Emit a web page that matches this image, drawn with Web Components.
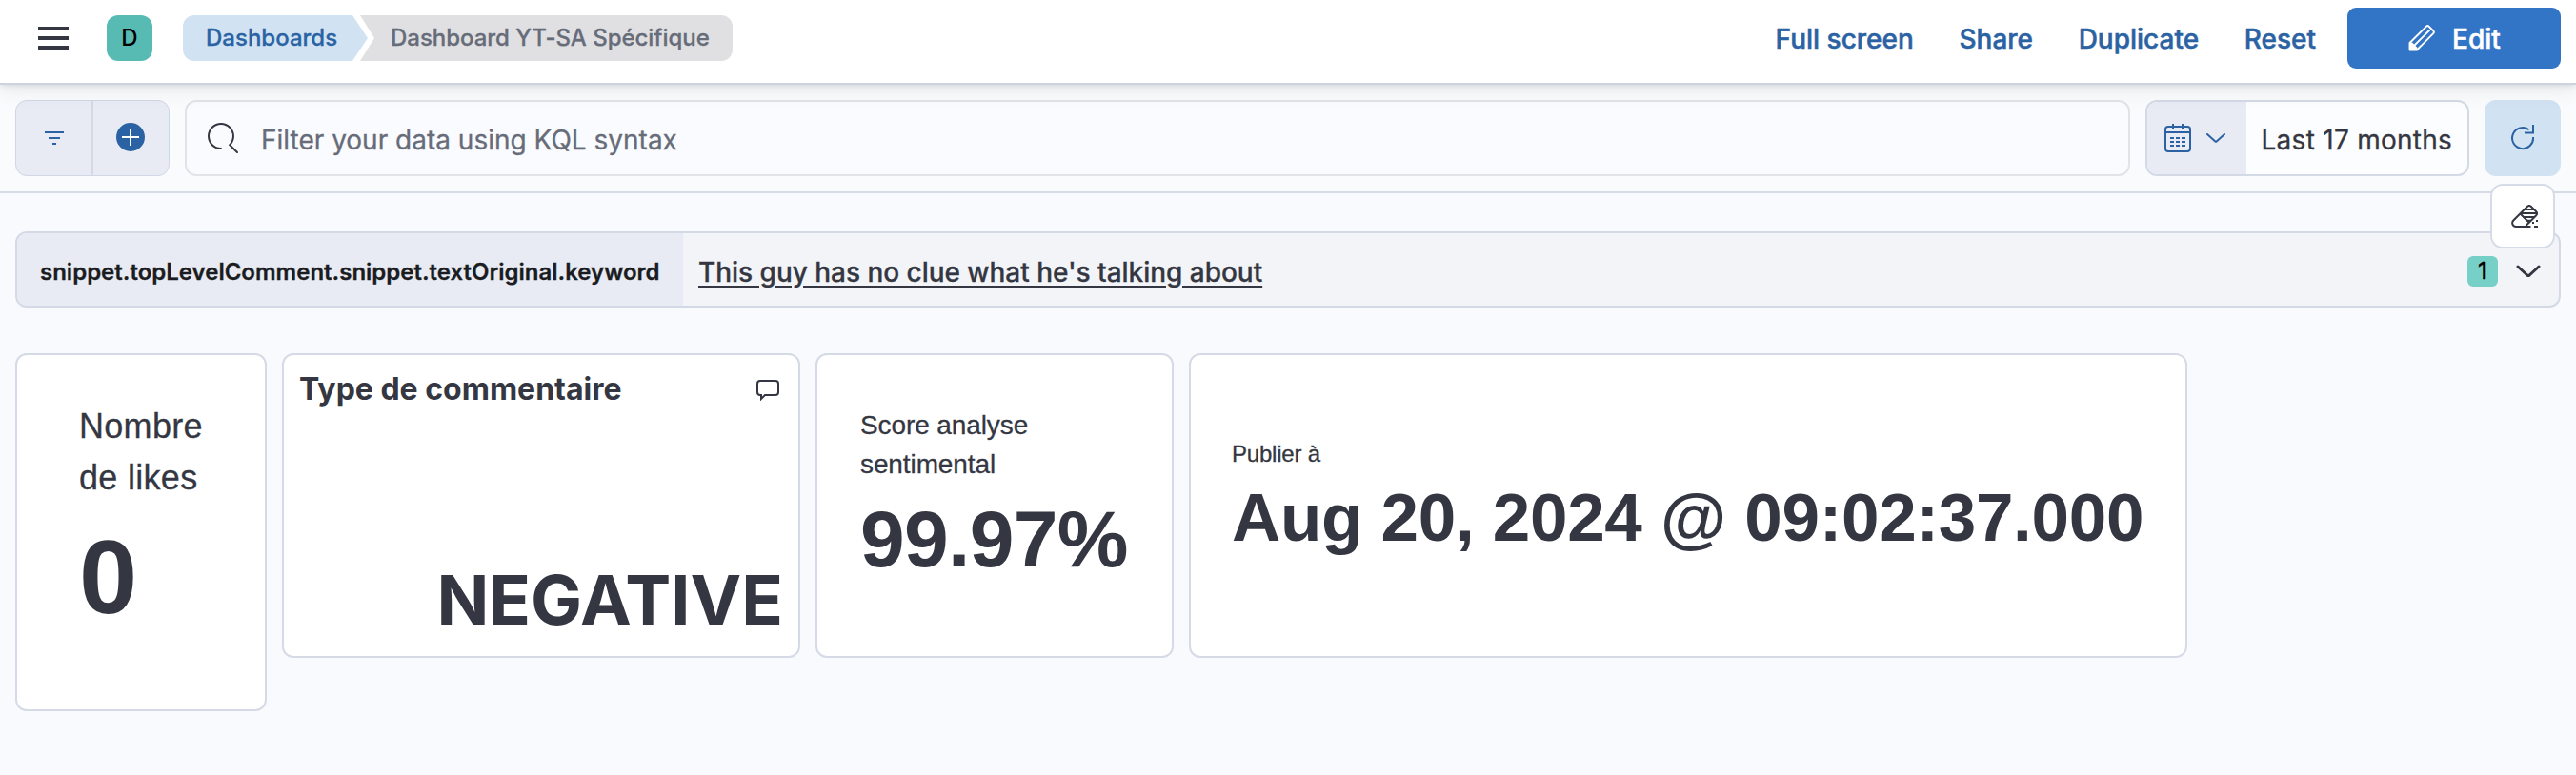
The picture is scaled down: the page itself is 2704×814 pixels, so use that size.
<!DOCTYPE html>
<html lang="fr">
<head>
<meta charset="utf-8">
<title>Dashboard YT-SA Spécifique</title>
<style>
html,body{margin:0;padding:0}
body{width:2704px;height:814px;overflow:hidden;background:#f9fafe;font-family:Inter,"Liberation Sans",sans-serif;color:#343741}
</style>
</head>
<body>
<dash-app></dash-app>
<script>
const base = '*{box-sizing:border-box}svg{display:block;flex:none}:host{box-sizing:border-box}';
function define(name, css, html) {
  const t = document.createElement('template');
  t.innerHTML = `<style>${base}${css}</style>${html}`;
  customElements.define(name, class extends HTMLElement {
    constructor() {
      super();
      this.attachShadow({ mode: 'open' }).appendChild(t.content.cloneNode(true));
    }
  });
}

define('crumb-trail', `
:host{display:flex;height:48px;font-size:24px;line-height:48px;font-weight:500;white-space:nowrap;-webkit-text-stroke:.3px currentColor}
.a{width:194px;padding-left:24px;color:#2a62a3;background:#d1e2f2;border-radius:12px 0 0 12px;clip-path:polygon(0 0,178px 0,194px 50%,178px 100%,0 100%)}
.b{width:391px;margin-left:-8px;padding-left:32px;letter-spacing:-.03px;color:#676c79;background:#e0e0e3;border-radius:0 12px 12px 0;clip-path:polygon(0 0,100% 0,100% 100%,0 100%,15px 50%)}
`, `<div class="a"><slot name="parent"></slot></div><div class="b"><slot></slot></div>`);

define('top-link', `:host{display:block;font-size:28px;line-height:64px;padding-top:1px;font-weight:500;color:#2a62a3;white-space:nowrap;-webkit-text-stroke:.5px currentColor}`, `<slot></slot>`);

define('edit-button', `
:host{display:flex;width:224px;height:64px;background:#3274c5;border-radius:9px;color:#fff;font-size:28px;font-weight:500;padding-left:64px;align-items:center;gap:18px}
span{padding-top:1px;-webkit-text-stroke:.5px currentColor}
`, `<svg width="28" height="28" viewBox="0 0 28 28" fill="none" stroke="#fff" stroke-width="1.900" stroke-linejoin="round"><path d="M1.500 19 18.800 1.800a2 2 0 0 1 2.800 0l4.600 4.600a2 2 0 0 1 0 2.800L9 26.500H1.500z"/><path d="M7 21 22 6" stroke-linecap="round"/><path d="M1 18.500 4 18.500 9.500 24 9 27H1z" fill="#fff" stroke="none"/></svg><span><slot></slot></span>`);

define('top-bar', `
:host{display:flex;position:relative;z-index:2;height:89px;padding:8px 16px 15px 40px;background:#fff;border-bottom:2px solid #cdd4e0;box-shadow:0 1.4px 3px rgba(0,0,0,.07),0 4px 8px rgba(0,0,0,.05),0 9px 20px rgba(0,0,0,.05)}
.menu{padding-top:20px;width:72px}
.avatar{width:48px;height:48px;margin:8px 32px 0 0;border-radius:12px;background:#57bbb3;color:#000;text-align:center;font-size:24px;line-height:48px;font-weight:500}
crumb-trail{margin-top:8px}
nav{margin-left:auto;display:flex;gap:47.6px}
edit-button{margin-left:-14.6px}
`, `
<div class="menu"><svg width="32" height="24" fill="#343741"><path d="M0 0h32v4H0zM0 10h32v4H0zM0 20h32v4H0z"/></svg></div>
<div class="avatar">D</div>
<crumb-trail><span slot="parent">Dashboards</span>Dashboard YT-SA Spécifique</crumb-trail>
<nav><top-link>Full screen</top-link><top-link>Share</top-link><top-link>Duplicate</top-link><top-link>Reset</top-link><edit-button>Edit</edit-button></nav>`);

define('filter-buttons', `
:host{display:flex;width:162px;height:80px;border-radius:12px;background:#e8ebf3;border:1px solid #d0d7e5;color:#2a62a3}
div{width:79px;display:flex;align-items:center;justify-content:center}
div+div{width:81px;border-left:2px solid #d3d9e7}
div:first-child{padding:2px 1px 0 0}
`, `<div><svg width="20" height="14" fill="#2a62a3"><path d="M0 0h20v2H0zM4 6h12v2H4zM8 12h4v2H8z"/></svg></div>
<div><svg width="30" height="30" style="margin:-2px 1px 0 0"><circle cx="15" cy="15" r="15" fill="#2a62a3"/><path d="M6 15h18M15 6v18" stroke="#fff" stroke-width="2"/></svg></div>`);

define('search-field', `
:host{display:flex;flex:1;height:80px;border:2px solid #e1e3e7;border-radius:12px;background:#fafbfe;padding:0 22px;color:#676c79;font-size:28px;gap:24px;align-items:center}
span{padding-top:3px;white-space:nowrap;-webkit-text-stroke:.3px currentColor}
`, `<svg width="32" height="32" viewBox="0 0 16 16" fill="#343741"><path d="M11.271 11.978l3.872 3.873a.502.502 0 00.708 0 .502.502 0 000-.708l-3.565-3.564c2.380-2.747 2.267-6.923-.342-9.532-2.730-2.730-7.170-2.730-9.898 0-2.728 2.729-2.728 7.170 0 9.900a6.955 6.955 0 004.949 2.050.5.5 0 000-1 5.960 5.960 0 01-4.242-1.757 6.010 6.010 0 010-8.486 6.004 6.004 0 018.484 0 6.010 6.010 0 010 8.486.5.5 0 00-.034.738z"/></svg><span><slot></slot></span>`);

define('date-picker', `
:host{display:flex;width:340px;height:80px;border:2px solid #d3dae6;border-radius:12px;background:#fcfdfe;overflow:hidden;font-size:28px}
.q{display:flex;align-items:center;width:104px;background:#e8ebf3;padding-left:18px;gap:16px}
.t{flex:1;padding:2px 0 0 15.5px;line-height:76px;white-space:nowrap;letter-spacing:.27px;-webkit-text-stroke:.3px currentColor}
`, `<div class="q"><svg width="28" height="30" fill="none" stroke="#2a62a3" stroke-width="2"><rect x="1" y="3" width="26" height="26" rx="3"/><path d="M1 9h26M9 0v6M19 0v6"/><path d="M6 15h16M6 19h16M6 23h16" stroke-dasharray="4 2"/></svg>
<svg width="20" height="10" fill="none" stroke="#2a62a3" stroke-width="2" stroke-linecap="round" stroke-linejoin="round"><path d="M1 1l8.300 7.400q.7.600 1.400 0L19 1"/></svg></div><div class="t"><slot></slot></div>`);

define('refresh-button', `
:host{display:block;width:80px;height:80px;border-radius:12px;background:#d1e2f2;padding:26px 0 0 28px}
`, `<svg width="25" height="28" fill="none" stroke="#2a62a3" stroke-width="2"><path d="M18.600 5.300A11 11 0 1 0 23 13M23 0v8.500H14"/></svg>`);

define('query-bar', `
:host{display:flex;height:114px;padding:16px;gap:16px;border-bottom:2px solid #d5dbe7;background:#fafbfd}
`, `<filter-buttons></filter-buttons><search-field>Filter your data using KQL syntax</search-field><date-picker>Last 17 months</date-picker><refresh-button></refresh-button>`);

define('clear-button', `
:host{position:absolute;display:block;left:2614px;top:193px;z-index:1;width:68px;height:68px;border:2px solid #d5dbe7;border-radius:13px;background:#fff;padding:20px}
`, `<svg width="28" height="24" fill="none" stroke="#343741" stroke-width="2" stroke-linejoin="round"><path d="M20.500 23H5C1.500 23 0 19 2.300 16.500L16.800 2a3 3 0 0 1 4.200 0l5.200 5.200a3 3 0 0 1 0 4L15.500 22M9.500 9.500 19 19M14.500 5h9M11 9h16M13 13h12"/><path d="M17 16.500h3" stroke-width="1.500"/><path d="M22 18h2v2h-2zM26 16h2v2h-2zM24 22h4v2h-4z" fill="#343741" stroke="none"/></svg>`);

define('control-bar', `
:host{display:flex;height:80px;margin:40px 16px 0;border:2px solid #d3dae6;border-radius:12px;background:#f3f4f8;overflow:hidden;white-space:nowrap}
.l{width:699px;background:#e8ebf3;padding:3px 0 0 24px;line-height:76px;font-size:24px;font-weight:600;color:#1a1c21;-webkit-text-stroke:.3px currentColor}
.v{padding:3px 0 0 16px;line-height:76px;font-size:28px;letter-spacing:-.03px;font-weight:500;text-decoration:underline;text-decoration-thickness:3px;text-underline-offset:4px;-webkit-text-stroke:.3px currentColor}
.r{margin-left:auto;display:flex;align-items:center;padding-right:19px;gap:19px}
.n{width:32px;height:32px;margin-top:4px;border-radius:6px;background:#77d0c8;color:#000;text-align:center;font-size:24px;line-height:32px;font-weight:500;-webkit-text-stroke:.3px currentColor}
`, `<div class="l"><slot name="label"></slot></div><div class="v"><slot></slot></div><div class="r"><div class="n">1</div><svg width="26" height="14" style="margin-top:3px" fill="none" stroke="#343741" stroke-width="3" stroke-linecap="round" stroke-linejoin="round"><path d="M2 2l9.800 9q1.200 1 2.400 0L24 2"/></svg></div>`);

define('dash-panel', `
:host{display:block;border:2px solid #d5dae6;border-radius:12px;background:#fff;height:320px}
`, `<slot></slot>`);

define('metric-tile', `
:host{display:block;font-family:"Liberation Sans",Arial,sans-serif;white-space:nowrap}
.l{font-size:var(--label);line-height:var(--lh);letter-spacing:var(--lls,0);-webkit-text-stroke:.3px currentColor}
.v{font-size:var(--value);line-height:1;font-weight:700;margin-top:var(--gap);letter-spacing:var(--ls,0)}
`, `<div class="l"><slot></slot></div><div class="v"><slot name="value"></slot></div>`);

define('titled-tile', `
:host{display:flex;flex-direction:column;justify-content:space-between;height:316px;padding:16px 16px 15px}
header{display:flex;justify-content:space-between;font-size:32px;line-height:40px;font-weight:700}
.v{font-size:72px;line-height:88px;font-weight:700;text-align:right}
svg{margin:10px 4px 0 0}
`, `<header><slot></slot><svg width="24" height="22" fill="none" stroke="#343741" stroke-width="2"><path d="M4 16q-3 0-3-3V4q0-3 3-3h16q3 0 3 3v9q0 3-3 3H9l-4 4v-4z"/></svg></header><div class="v"><slot name="value"></slot></div>`);

define('dash-app', `
:host{display:block;position:relative;width:2704px;height:814px}
main{display:flex;gap:16px;padding:48px 16px 0;align-items:flex-start}
`, `
<top-bar></top-bar><query-bar></query-bar><clear-button></clear-button>
<control-bar><span slot="label">snippet.topLevelComment.snippet.textOriginal.keyword</span>This guy has no clue what he's talking about</control-bar>
<main>
<dash-panel style="width:264px;height:376px;padding:48px 0 0 65px"><metric-tile style="--label:36px;--lh:54px;--lls:.3px;--value:110px;--gap:22px">Nombre<br>de likes<span slot="value">0</span></metric-tile></dash-panel>
<dash-panel style="width:544px"><titled-tile>Type de commentaire<span slot="value">NEGATIVE</span></titled-tile></dash-panel>
<dash-panel style="width:376px;padding:53px 0 0 45px"><metric-tile style="--label:28px;--lh:41px;--lls:-.1px;--value:84px;--gap:16px;--ls:-.7px">Score analyse<br>sentimental<span slot="value">99.97%</span></metric-tile></dash-panel>
<dash-panel style="width:1048px;padding:86px 0 0 43px"><metric-tile style="--label:24px;--lh:36px;--lls:-.2px;--value:71px;--gap:13px;--ls:-.3px">Publier à<span slot="value">Aug 20, 2024 @ 09:02:37.000</span></metric-tile></dash-panel>
</main>`);
</script>
</body>
</html>
